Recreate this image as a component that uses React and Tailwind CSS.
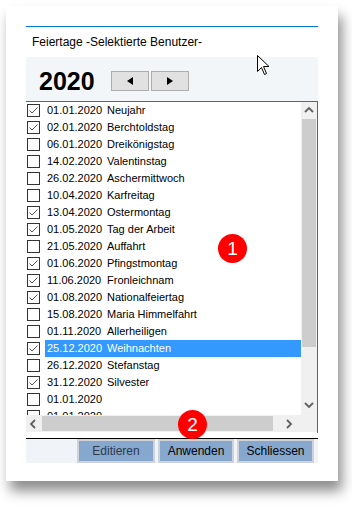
import React from 'react';

const holidays = [
  ['01.01.2020', 'Neujahr', true],
  ['02.01.2020', 'Berchtoldstag', true],
  ['06.01.2020', 'Dreikönigstag', false],
  ['14.02.2020', 'Valentinstag', false],
  ['26.02.2020', 'Aschermittwoch', false],
  ['10.04.2020', 'Karfreitag', false],
  ['13.04.2020', 'Ostermontag', true],
  ['01.05.2020', 'Tag der Arbeit', true],
  ['21.05.2020', 'Auffahrt', false],
  ['01.06.2020', 'Pfingstmontag', true],
  ['11.06.2020', 'Fronleichnam', true],
  ['01.08.2020', 'Nationalfeiertag', true],
  ['15.08.2020', 'Maria Himmelfahrt', false],
  ['01.11.2020', 'Allerheiligen', false],
  ['25.12.2020', 'Weihnachten', true, true],
  ['26.12.2020', 'Stefanstag', false],
  ['31.12.2020', 'Silvester', true],
  ['01.01.2020', '', false],
  ['01.01.2020', '', false]
];

function CheckBox({ checked }) {
  return (
    <span className="w-[13px] h-[13px] border border-[#333] bg-white flex items-center justify-center shrink-0">
      {checked && (
        <svg width="11" height="11" viewBox="0 0 11 11">
          <polyline points="1.5,5.5 4,8 9.5,2.5" fill="none" stroke="#555" strokeWidth="1" />
        </svg>
      )}
    </span>
  );
}

function Chevron({ dir }) {
  const pts = {
    up: '1,6 5,2 9,6',
    down: '1,2 5,6 9,2',
    left: '6,1 2,5 6,9',
    right: '2,1 6,5 2,9'
  }[dir];
  return (
    <svg width="10" height="10" viewBox="0 0 10 10">
      <polyline points={pts} fill="none" stroke="#606060" strokeWidth="1.8" />
    </svg>
  );
}

function Badge({ n, className }) {
  return (
    <div className={'absolute w-[29px] h-[29px] rounded-full bg-[#f00] text-white flex items-center justify-center text-[19px] leading-none ' + className}>
      {n}
    </div>
  );
}

export default function App() {
  return (
    <div className="w-[352px] h-[511px] bg-white relative font-['Liberation_Sans',Arial,sans-serif] overflow-hidden">
      <div className="absolute left-[6px] top-[6px] w-[332px] h-[475px] bg-white shadow-[4px_10px_12px_rgba(0,0,0,0.45)] px-[20px] pt-[20px]">
        <div className="h-px bg-[#0078d7]" />
        <div className="h-[30px] flex items-center pl-[6px] text-[12px] text-black">
          Feiertage -Selektierte Benutzer-
        </div>

        {/* Jahr */}
        <div className="h-[44px] bg-[#f3f6f9] flex items-center pl-[13px]">
          <span className="text-[25px] font-bold text-black leading-none w-[72px] mt-[4px]">2020</span>
          <div className="flex gap-[2px] mt-[4px]">
            <button className="w-[38px] h-[20px] bg-[#e1e1e1] border border-[#adadad] flex items-center justify-center">
              <svg width="8" height="8" viewBox="0 0 8 8"><polygon points="7,0 7,8 1,4" fill="#000" /></svg>
            </button>
            <button className="w-[38px] h-[20px] bg-[#e1e1e1] border border-[#adadad] flex items-center justify-center">
              <svg width="8" height="8" viewBox="0 0 8 8"><polygon points="1,0 1,8 7,4" fill="#000" /></svg>
            </button>
          </div>
        </div>

        {/* Liste */}
        <div className="h-[332px] border-t border-r border-[#646464] flex flex-col bg-white">
          <div className="flex h-[313px]">
            <div className="flex-1 overflow-hidden text-[11px] text-black">
              {holidays.map(([date, name, checked, selected], i) => (
                <div key={i} className="h-[17px] flex items-center pl-px">
                  <CheckBox checked={checked} />
                  <div className={'ml-[5px] pl-[2px] flex-1 h-[17px] flex items-center ' + (selected ? 'bg-[#3399ff] text-white' : '')}>
                    <span className="w-[60px]">{date}</span>
                    <span>{name}</span>
                  </div>
                </div>
              ))}
            </div>
            <div className="w-[16px] bg-[#f0f0f0] flex flex-col">
              <div className="h-[17px] flex items-center justify-center"><Chevron dir="up" /></div>
              <div className="h-[228px] bg-[#cdcdcd] mx-[1px]" />
              <div className="flex-1 flex items-end justify-center pb-[4px]"><Chevron dir="down" /></div>
            </div>
          </div>
          <div className="flex h-[17px]">
            <div className="flex-1 bg-[#f0f0f0] flex items-center">
              <div className="w-[16px] flex justify-center"><Chevron dir="left" /></div>
              <div className="w-[231px] h-[15px] bg-[#cdcdcd]" />
              <div className="flex-1 flex justify-end pr-[6px]"><Chevron dir="right" /></div>
            </div>
            <div className="w-[16px] bg-[#f0f0f0]" />
          </div>
        </div>

        <div className="h-[5px]" />
        <div className="h-px bg-black" />

        {/* Buttons */}
        <div className="h-[24px] bg-[#f0f3f7] flex justify-end gap-[3px] pr-[4px] text-[12px]">
          <button className="w-[78px] h-[24px] bg-[#86a8cf] border-2 border-[#cfd2d6] text-[#2e3a46]">Editieren</button>
          <button className="w-[76px] h-[24px] bg-[#86a8cf] border-2 border-[#cfd2d6] text-black">Anwenden</button>
          <button className="w-[77px] h-[24px] bg-[#86a8cf] border-2 border-[#cfd2d6] text-black">Schliessen</button>
        </div>
      </div>

      <Badge n="1" className="left-[218px] top-[234px]" />
      <Badge n="2" className="left-[178px] top-[410px]" />

      {/* Mauszeiger */}
      <svg className="absolute left-[257px] top-[55px]" width="13" height="21" viewBox="0 0 13 21">
        <path d="M0.5 0.5 L0.5 16.5 L4.5 12.5 L7.5 19.5 L9.5 18.5 L6.5 11.5 L12 11.5 Z" fill="#fff" stroke="#000" strokeWidth="1" strokeLinejoin="miter" />
      </svg>
    </div>
  );
}
